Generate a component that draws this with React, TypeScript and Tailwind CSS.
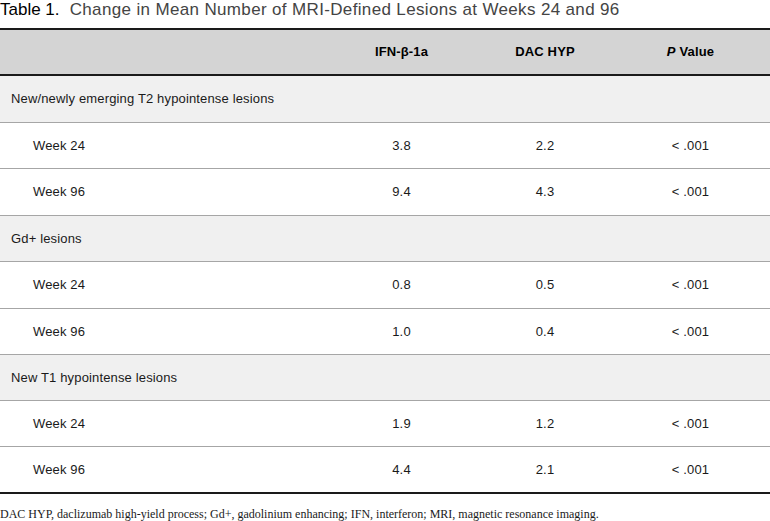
const groups = [
  {
    label: 'New/newly emerging T2 hypointense lesions',
    rows: [
      ['Week 24', '3.8', '2.2', '< .001'],
      ['Week 96', '9.4', '4.3', '< .001'],
    ],
  },
  {
    label: 'Gd+ lesions',
    rows: [
      ['Week 24', '0.8', '0.5', '< .001'],
      ['Week 96', '1.0', '0.4', '< .001'],
    ],
  },
  {
    label: 'New T1 hypointense lesions',
    rows: [
      ['Week 24', '1.9', '1.2', '< .001'],
      ['Week 96', '4.4', '2.1', '< .001'],
    ],
  },
]

// row heights picked off the reference so lines land on the same pixels
const groupH = ['h-[47px]', 'h-[46px]', 'h-[46px]']
const rowH = [
  ['h-[46px]', 'h-[47px]'],
  ['h-[47px]', 'h-[46px]'],
  ['h-[46px]', 'h-[47px]'],
]

const cols = 'grid grid-cols-[330px_143px_144px_1fr] items-center'

export default function App() {
  return (
    <div className="w-[770px] h-[521px] bg-white font-['Liberation_Sans',Arial,sans-serif] text-[#1a1a1a] overflow-hidden">
      <h1 className="h-[28px] text-[17px] leading-[19px] text-[#444] tracking-[0.35px]">
        <span className="text-black tracking-normal">Table 1.</span>&nbsp; Change in Mean Number of MRI-Defined Lesions at Weeks 24 and 96
      </h1>

      <div className="border-t-2 border-[#1a1a1a] tracking-[0.15px]">
        <div className={`${cols} h-[46px] bg-[#d4d4d4] border-b-2 border-[#1a1a1a] text-[13px] font-bold text-black`}>
          <div />
          <div className="text-center">IFN-β-1a</div>
          <div className="text-center">DAC HYP</div>
          <div className="text-center pr-[6px]">
            <span className="italic">P</span> Value
          </div>
        </div>

        {groups.map((g, gi) => (
          <div key={gi}>
            <div className={`${groupH[gi]} bg-[#f0f0f0] border-b border-[#a6a6a6] flex items-center pl-[11px] text-[13px]`}>
              {g.label}
            </div>
            {g.rows.map((r, ri) => (
              <div
                key={ri}
                className={`${cols} ${rowH[gi][ri]} text-[13px] ${gi === 2 && ri === 1 ? 'border-b-2 border-[#1a1a1a]' : 'border-b border-[#a6a6a6]'}`}
              >
                <div className="pl-[33px]">{r[0]}</div>
                <div className="text-center">{r[1]}</div>
                <div className="text-center">{r[2]}</div>
                <div className="text-center pr-[6px]">{r[3]}</div>
              </div>
            ))}
          </div>
        ))}
      </div>

      <p className="pt-[13px] text-[12px] leading-[15px] font-['Liberation_Serif',serif] text-[#1a1a1a]">
        DAC HYP, daclizumab high-yield process; Gd+, gadolinium enhancing; IFN, interferon; MRI, magnetic resonance imaging.
      </p>
    </div>
  )
}
